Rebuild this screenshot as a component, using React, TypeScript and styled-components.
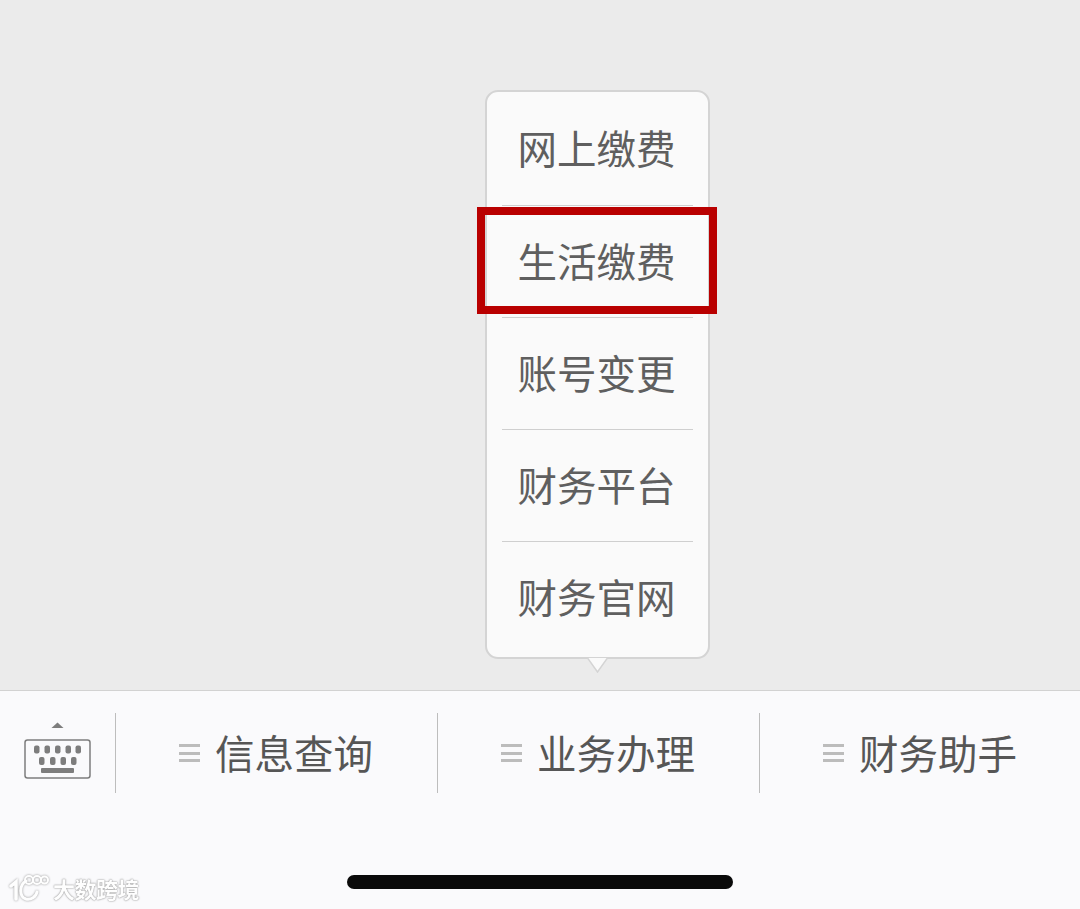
import React from "react";
import styled, { createGlobalStyle } from "styled-components";

const Global = createGlobalStyle`
  html, body { margin: 0; padding: 0; background: #ebebeb; }
  body { font-family: "Noto Sans CJK SC", "Liberation Sans", sans-serif; }
`;

const Screen = styled.div`
  position: relative;
  width: 1080px;
  height: 909px;
  overflow: hidden;
  display: flex;
  flex-direction: column;
`;

const Stage = styled.div`
  height: 690px;
  flex: none;
  box-sizing: border-box;
  padding: 90px 0 0 485px;
  background: #ebebeb;
`;

const Popup = styled.div`
  position: relative;
  box-sizing: border-box;
  width: 225px;
  height: 569px;
  padding: 0 15px;
  background: #fafafa;
  border: 2px solid #d4d4d4;
  border-radius: 13px;
  display: flex;
  flex-direction: column;
`;

const Arrow = styled.svg`
  position: absolute;
  left: 100px;
  bottom: -16px;
  width: 21px;
  height: 16px;
`;

const MenuItem = styled.div<{ $first?: boolean }>`
  flex: none;
  height: ${(p) => (p.$first ? 113 : 112)}px;
  box-sizing: border-box;
  padding: 0 2px ${(p) => (p.$first ? 4 : 5)}px 0;
  display: flex;
  align-items: center;
  justify-content: center;
  font-size: 39.5px;
  font-weight: 400;
  color: #5f5f5f;
  border-top: ${(p) => (p.$first ? "none" : "1.5px solid #cfcfcf")};
`;

const Highlight = styled.div`
  position: absolute;
  left: 477px;
  top: 207px;
  width: 240px;
  height: 107px;
  box-sizing: border-box;
  border: 8px solid #b90000;
`;

const Bar = styled.div`
  flex: 1;
  background: #fafafc;
  border-top: 1.5px solid #d2d2d2;
  display: flex;
  flex-direction: column;
`;

const Tabs = styled.div`
  display: flex;
  height: 80px;
  margin-top: 22px;
`;

const KeyboardCell = styled.div`
  width: 115px;
  flex: none;
  box-sizing: border-box;
  padding: 8px 0 0 24px;
`;

const Tab = styled.div`
  width: 322px;
  flex: none;
  box-sizing: border-box;
  border-left: 1px solid #bdbdbd;
  display: flex;
  align-items: center;
  justify-content: center;
  gap: 15px;
  padding: 0 1px 3px 0;
  font-size: 39.5px;
  font-weight: 400;
  color: #565656;
`;

const MenuGlyph = styled.span`
  width: 21px;
  height: 18px;
  flex: none;
  box-sizing: border-box;
  margin-top: 3px;
  border-top: 3px solid #bcbcbc;
  border-bottom: 3px solid #bcbcbc;
  display: flex;
  align-items: center;
  &::before {
    content: "";
    display: block;
    width: 100%;
    height: 3px;
    background: #bcbcbc;
  }
`;

const HomeIndicator = styled.div`
  width: 386px;
  height: 14px;
  margin: 82px auto 0;
  border-radius: 7px;
  background: #0a0a0a;
`;

const Watermark = styled.div`
  position: absolute;
  left: 9px;
  top: 873px;
  display: flex;
  align-items: center;
  gap: 4px;
  color: #ffffff;
  font-size: 22px;
  line-height: 30px;
  font-weight: 700;
  letter-spacing: -0.5px;
  opacity: 0.95;
  text-shadow: 0 0 2px #8e8e8e, 0 0 1px #8e8e8e;
`;

const LogoMark = styled.svg`
  width: 40px;
  height: 30px;
  flex: none;
  filter: drop-shadow(0 0 1px #8e8e8e);
`;

const KeyboardIcon = () => (
  <svg width="67" height="58" viewBox="0 0 67 58" fill="none">
    <path d="M27.500 7 L33.500 1.500 L39.500 7 Z" fill="#7d7d7d" />
    <rect x="1" y="19" width="65" height="38" rx="2.500" stroke="#7d7d7d" strokeWidth="1.500" fill="#fafafc" />
    {[10, 20.5, 31, 41.5, 51.5].map((x) => (
      <rect key={x} x={x} y="24.500" width="5.500" height="8" rx="2" fill="#7d7d7d" />
    ))}
    {[15, 26, 36.5, 47].map((x) => (
      <rect key={x} x={x} y="36" width="5.500" height="8" rx="2" fill="#7d7d7d" />
    ))}
    <rect x="17" y="47" width="33" height="5" rx="1" fill="#7d7d7d" />
  </svg>
);

const Logo = () => (
  <LogoMark viewBox="0 0 40 30" fill="none" stroke="#ffffff" strokeLinecap="round">
    <path d="M2 13 L7 9 V26" strokeWidth="3.500" />
    <path d="M17 8 C10 12 10 24 17 26 C22 27 27 24 28 19" strokeWidth="3" />
    <circle cx="20" cy="7" r="4" strokeWidth="2" />
    <circle cx="28" cy="7" r="4" strokeWidth="2" />
    <circle cx="35.500" cy="7" r="3.500" strokeWidth="2" />
  </LogoMark>
);

const items = ["网上缴费", "生活缴费", "账号变更", "财务平台", "财务官网"];
const tabs = ["信息查询", "业务办理", "财务助手"];

export default function App() {
  return (
    <Screen>
      <Global />
      <Stage>
        <Popup>
          {items.map((t, i) => (
            <MenuItem key={t} $first={i === 0}>{t}</MenuItem>
          ))}
          <Arrow viewBox="0 0 21 16">
            <path d="M0.500 1 L10.500 15 L20.500 1" fill="#fafafa" stroke="#d4d4d4" strokeWidth="1.500" />
          </Arrow>
        </Popup>
      </Stage>
      <Bar>
        <Tabs>
          <KeyboardCell><KeyboardIcon /></KeyboardCell>
          {tabs.map((t) => (
            <Tab key={t}><MenuGlyph />{t}</Tab>
          ))}
        </Tabs>
        <HomeIndicator />
      </Bar>
      <Highlight />
      <Watermark><Logo />大数跨境</Watermark>
    </Screen>
  );
}
